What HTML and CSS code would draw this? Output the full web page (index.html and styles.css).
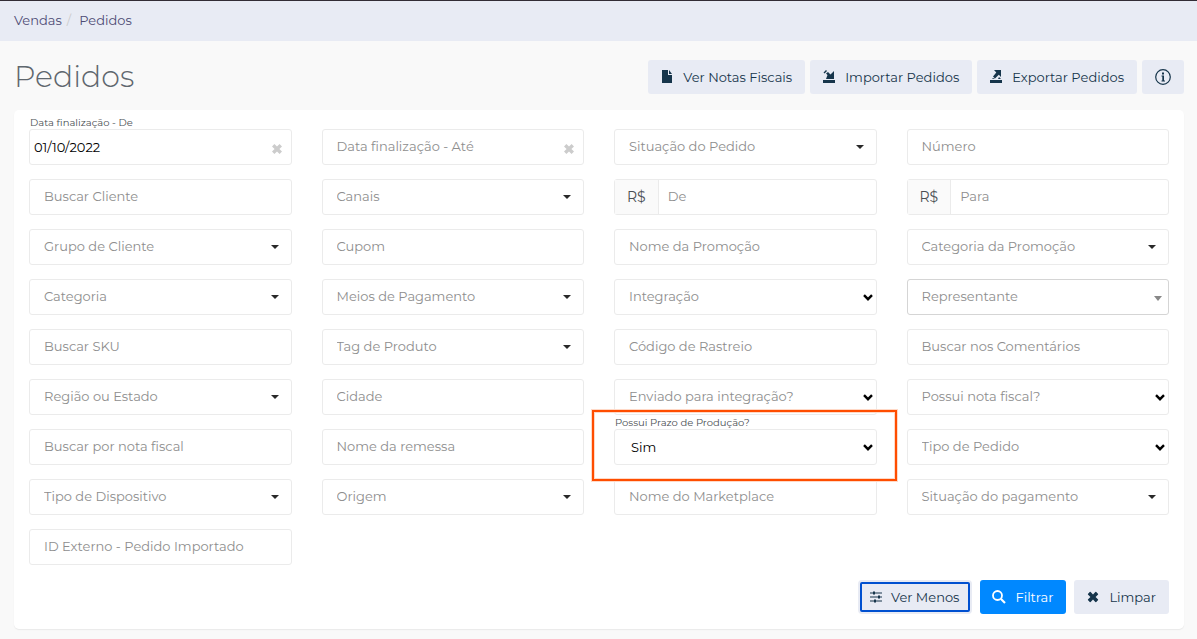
FILE: index.html
```html
<!DOCTYPE html>
<html lang="pt-BR">

<head>
    <meta charset="UTF-8">
    <meta name="viewport" content="width=device-width, initial-scale=1">
    <title>Pedidos</title>
    <link rel="stylesheet" href="styles.css">
</head>

<body>
    <!-- Shared icons -->
    <svg class="icon-library" aria-hidden="true">
        <symbol id="caret" viewBox="0 0 8 4" preserveAspectRatio="none">
            <path d="M0 0h8L4 4z" />
        </symbol>
        <symbol id="chevron" viewBox="0 0 10 7">
            <path d="M1 1.2l4 4 4-4" fill="none" stroke="currentColor" stroke-width="2.4" />
        </symbol>
        <symbol id="times" viewBox="0 0 10 10">
            <path d="M2.4 0L5 2.6 7.6 0 10 2.4 7.4 5 10 7.6 7.6 10 5 7.4 2.4 10 0 7.6 2.6 5 0 2.4z" />
        </symbol>
    </svg>

    <nav class="breadcrumb" aria-label="Navegação">
        <a href="#">Vendas</a>
        <span class="separator">/</span>
        <a href="#">Pedidos</a>
    </nav>

    <main class="page">
        <header class="page-header">
            <h1>Pedidos</h1>
            <div class="header-actions">
                <button type="button" class="btn">
                    <svg class="icon" viewBox="0 0 14 14"><path d="M2 0h6v5h4v8H2zM9 0l3 4H9z" /></svg>
                    Ver Notas Fiscais
                </button>
                <button type="button" class="btn">
                    <svg class="icon" viewBox="0 0 14 14"><path d="M1 10h12v3H1zM4 9l1.500-4L4 3.500 6 2l2.500 2.500L12 1v8zM1.500 2.500L4 0l1 1-2.500 2.500z" /></svg>
                    Importar Pedidos
                </button>
                <button type="button" class="btn">
                    <svg class="icon" viewBox="0 0 14 14"><path d="M1 10h12v3H1zM5 0h7v7L9.8 4.8 6 8.5l-2-2 3.3-3.9zM10 7l2 2H9zM4 8l2 1H3z" /></svg>
                    Exportar Pedidos
                </button>
                <button type="button" class="btn btn-info" aria-label="Informações">
                    <svg class="icon-info" viewBox="0 0 16 16">
                        <circle cx="8" cy="8" r="7.3" fill="none" stroke="currentColor" stroke-width="1.2" />
                        <path d="M7 3.5h2v2H7zM6.500 6.500H9v5h1v1H6.500v-1h.8v-4h-.8z" />
                    </svg>
                </button>
            </div>
        </header>

        <form class="card">
            <div class="filters">
                <div class="field date filled">
                    <label for="data-de">Data finalização - De</label>
                    <input type="text" id="data-de" value="01/10/2022">
                    <button type="button" class="clear" aria-label="Limpar data inicial"><svg><use href="#times" /></svg></button>
                </div>
                <div class="field date">
                    <input type="text" placeholder="Data finalização - Até" aria-label="Data finalização - Até">
                    <button type="button" class="clear" aria-label="Limpar data final"><svg><use href="#times" /></svg></button>
                </div>
                <div class="field">
                    <select aria-label="Situação do Pedido"><option>Situação do Pedido</option></select>
                    <svg class="caret"><use href="#caret" /></svg>
                </div>
                <div class="field">
                    <input type="text" placeholder="Número" aria-label="Número">
                </div>

                <div class="field">
                    <input type="text" placeholder="Buscar Cliente" aria-label="Buscar Cliente">
                </div>
                <div class="field">
                    <select aria-label="Canais"><option>Canais</option></select>
                    <svg class="caret"><use href="#caret" /></svg>
                </div>
                <div class="field money">
                    <span class="addon">R$</span>
                    <input type="text" placeholder="De" aria-label="Valor de">
                </div>
                <div class="field money">
                    <span class="addon">R$</span>
                    <input type="text" placeholder="Para" aria-label="Valor para">
                </div>

                <div class="field">
                    <select aria-label="Grupo de Cliente"><option>Grupo de Cliente</option></select>
                    <svg class="caret"><use href="#caret" /></svg>
                </div>
                <div class="field">
                    <input type="text" placeholder="Cupom" aria-label="Cupom">
                </div>
                <div class="field">
                    <input type="text" placeholder="Nome da Promoção" aria-label="Nome da Promoção">
                </div>
                <div class="field">
                    <select aria-label="Categoria da Promoção"><option>Categoria da Promoção</option></select>
                    <svg class="caret"><use href="#caret" /></svg>
                </div>

                <div class="field">
                    <select aria-label="Categoria"><option>Categoria</option></select>
                    <svg class="caret"><use href="#caret" /></svg>
                </div>
                <div class="field">
                    <select aria-label="Meios de Pagamento"><option>Meios de Pagamento</option></select>
                    <svg class="caret"><use href="#caret" /></svg>
                </div>
                <div class="field">
                    <select aria-label="Integração"><option>Integração</option></select>
                    <svg class="chevron"><use href="#chevron" /></svg>
                </div>
                <div class="field search-select">
                    <select aria-label="Representante"><option>Representante</option></select>
                    <svg class="caret"><use href="#caret" /></svg>
                </div>

                <div class="field">
                    <input type="text" placeholder="Buscar SKU" aria-label="Buscar SKU">
                </div>
                <div class="field">
                    <select aria-label="Tag de Produto"><option>Tag de Produto</option></select>
                    <svg class="caret"><use href="#caret" /></svg>
                </div>
                <div class="field">
                    <input type="text" placeholder="Código de Rastreio" aria-label="Código de Rastreio">
                </div>
                <div class="field">
                    <input type="text" placeholder="Buscar nos Comentários" aria-label="Buscar nos Comentários">
                </div>

                <div class="field">
                    <select aria-label="Região ou Estado"><option>Região ou Estado</option></select>
                    <svg class="caret"><use href="#caret" /></svg>
                </div>
                <div class="field">
                    <input type="text" placeholder="Cidade" aria-label="Cidade">
                </div>
                <div class="field">
                    <select aria-label="Enviado para integração?"><option>Enviado para integração?</option></select>
                    <svg class="chevron"><use href="#chevron" /></svg>
                </div>
                <div class="field">
                    <select aria-label="Possui nota fiscal?"><option>Possui nota fiscal?</option></select>
                    <svg class="chevron"><use href="#chevron" /></svg>
                </div>

                <div class="field">
                    <input type="text" placeholder="Buscar por nota fiscal" aria-label="Buscar por nota fiscal">
                </div>
                <div class="field">
                    <input type="text" placeholder="Nome da remessa" aria-label="Nome da remessa">
                </div>
                <div class="field filled highlight">
                    <label for="prazo">Possui Prazo de Produção?</label>
                    <select id="prazo"><option>Sim</option><option>Não</option></select>
                    <svg class="chevron"><use href="#chevron" /></svg>
                </div>
                <div class="field">
                    <select aria-label="Tipo de Pedido"><option>Tipo de Pedido</option></select>
                    <svg class="chevron"><use href="#chevron" /></svg>
                </div>

                <div class="field">
                    <select aria-label="Tipo de Dispositivo"><option>Tipo de Dispositivo</option></select>
                    <svg class="caret"><use href="#caret" /></svg>
                </div>
                <div class="field">
                    <select aria-label="Origem"><option>Origem</option></select>
                    <svg class="caret"><use href="#caret" /></svg>
                </div>
                <div class="field">
                    <input type="text" placeholder="Nome do Marketplace" aria-label="Nome do Marketplace">
                </div>
                <div class="field">
                    <select aria-label="Situação do pagamento"><option>Situação do pagamento</option></select>
                    <svg class="caret"><use href="#caret" /></svg>
                </div>

                <div class="field">
                    <input type="text" placeholder="ID Externo - Pedido Importado" aria-label="ID Externo - Pedido Importado">
                </div>
            </div>

            <div class="form-actions">
                <button type="button" class="btn btn-active">
                    <svg class="icon" viewBox="0 0 14 14">
                        <path d="M0 3h12M0 7h12M0 11h12" stroke="currentColor" stroke-width="1.2" />
                        <path d="M3 1.5h2v3H3zM8 5.500h2v3H8zM4 9.500h2v3H4z" />
                    </svg>
                    Ver Menos
                </button>
                <button type="submit" class="btn btn-primary">
                    <svg class="icon" viewBox="0 0 14 14">
                        <circle cx="5.500" cy="5.500" r="4.500" fill="none" stroke="currentColor" stroke-width="1.8" />
                        <path d="M9 9l4 4" stroke="currentColor" stroke-width="2.2" />
                    </svg>
                    Filtrar
                </button>
                <button type="reset" class="btn">
                    <svg class="icon" viewBox="-1.5 -1.5 13 13"><use href="#times" width="10" height="10" /></svg>
                    Limpar
                </button>
            </div>
        </form>
    </main>
</body>

</html>
```
FILE: styles.css
```css
* {
    box-sizing: border-box;
}

body {
    margin: 0;
    background-color: #f9f9f9;
    color: #4b4f54;
    font-family: Montserrat, Inter, sans-serif;
    font-size: 13px;
}

button,
input,
select {
    font: inherit;
}

svg {
    display: block;
    fill: currentColor;
}

.icon-library {
    display: none;
}

.breadcrumb {
    display: flex;
    align-items: center;
    gap: 5px;
    height: 41px;
    padding: 0 14px 2px;
    border-top: 1px solid #322c35;
    background-color: #e8ebf4;
}

.breadcrumb a {
    color: #4e4b75;
    text-decoration: none;
}

.breadcrumb .separator {
    margin-right: 3px;
    color: #ccc;
}

.page {
    padding: 19px 13px 10px 14px;
}

.page-header {
    display: flex;
    justify-content: space-between;
    align-items: center;
    margin-bottom: 16px;
}

h1 {
    margin: 0;
    color: #5f676e;
    font-size: 30px;
    font-weight: 300;
    line-height: 34px;
}

.header-actions,
.form-actions {
    display: flex;
    gap: 5px;
}

.btn {
    display: flex;
    align-items: center;
    gap: 9px;
    height: 34px;
    padding: 0 13px 0 12px;
    border: none;
    border-radius: 3px;
    background-color: #e8ebf4;
    color: #16354b;
    cursor: pointer;
}

.icon {
    width: 14px;
    height: 14px;
}

.icon-info {
    width: 16px;
    height: 16px;
}

.btn-info {
    padding: 0 13px;
}

.btn-primary {
    background-color: #0088ff;
    color: #ffffff;
}

/* Focus ring drawn inside the button edge */
.btn-active {
    gap: 7px;
    outline: 2px solid #0050d0;
    outline-offset: -4px;
    border-radius: 4px;
}

.card {
    padding: 19px 15px 15px;
    border-radius: 5px;
    background-color: #ffffff;
    box-shadow: 0 1px 1px #e9e9e9;
}

.filters {
    display: grid;
    grid-template-columns: repeat(4, 1fr);
    gap: 14px 30px;
}

.field {
    position: relative;
    display: flex;
    height: 36px;
    border: 1px solid #ebebeb;
    border-radius: 3px;
}

.field input,
.field select {
    flex: 1;
    min-width: 0;
    padding: 0 14px 2px;
    border: none;
    background: transparent;
    color: #8e8e8e;
    appearance: none;
    outline: none;
}

.field input::placeholder {
    color: #8e8e8e;
    opacity: 1;
}

.field label {
    position: absolute;
    top: -15px;
    left: 0;
    font-size: 10px;
    line-height: 16px;
}

.field.filled input,
.field.filled select {
    padding-bottom: 0;
    padding-left: 16px;
    color: #000000;
}

.field.date.filled input {
    padding-left: 4px;
}

.caret {
    position: absolute;
    top: 15px;
    right: 12px;
    width: 8px;
    height: 4px;
    color: #292929;
    pointer-events: none;
}

.chevron {
    position: absolute;
    top: 14px;
    right: 3px;
    width: 10px;
    height: 7px;
    color: #000000;
    pointer-events: none;
}

.clear {
    display: flex;
    align-items: center;
    padding: 3px 9px 0;
    border: none;
    background: transparent;
    color: #cccccc;
    cursor: pointer;
}

.clear svg {
    width: 10px;
    height: 10px;
}

.search-select {
    border-color: #d5d5d5;
}

.search-select .caret {
    top: 16px;
    right: 6px;
    height: 5px;
    color: #888888;
}

.addon {
    display: flex;
    align-items: center;
    padding: 0 12px;
    border-right: 1px solid #ebebeb;
    background-color: #fafafa;
    font-size: 14px;
}

.field.money input {
    padding-left: 9px;
}

/* Orange frame around the field and its label */
.highlight::after {
    content: "";
    position: absolute;
    z-index: 1;
    inset: -20px -21px -17px -23px;
    border: 2px solid #ff4d00;
    box-shadow: 0 0 0 1px #ffd9c7, inset 0 0 0 1px #ffd9c7;
    pointer-events: none;
}

.form-actions {
    justify-content: flex-end;
    gap: 8px;
    margin-top: 15px;
}
```
